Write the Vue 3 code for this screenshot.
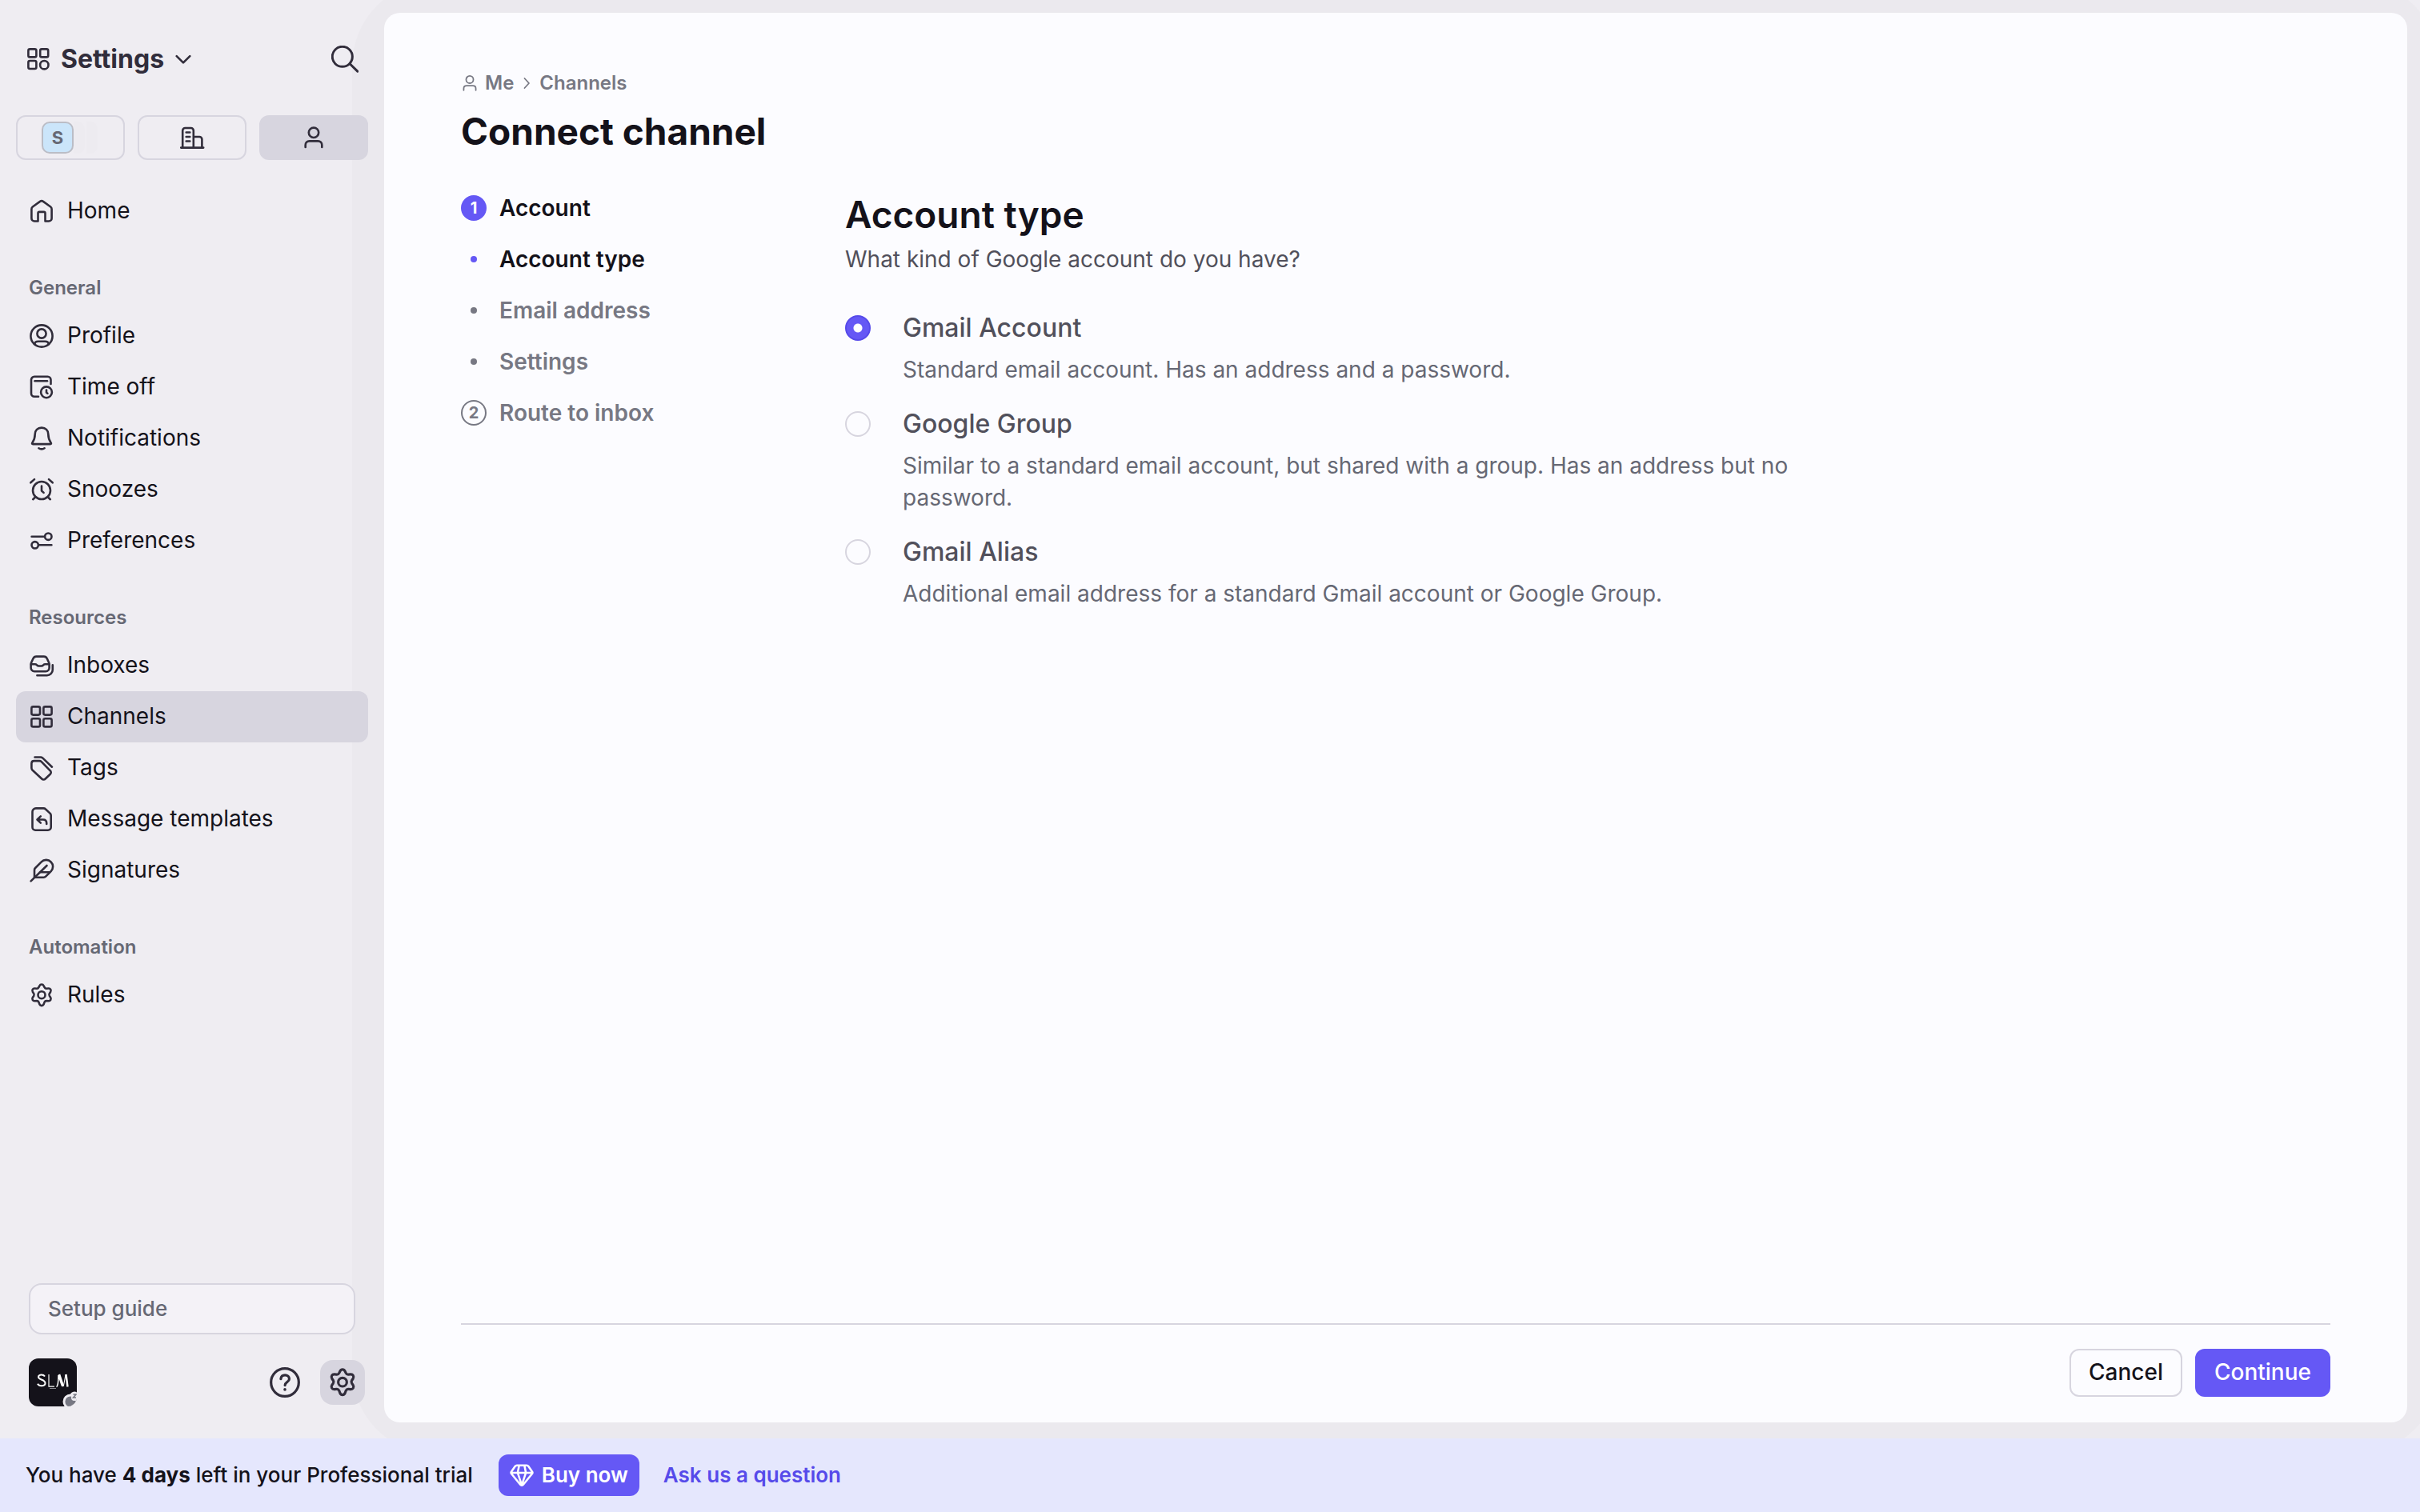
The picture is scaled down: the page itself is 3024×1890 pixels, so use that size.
<script setup>
import { ref, h } from 'vue'

const ICONS = {
  home: '<path d="M7 28.5h4.5V18.5a1.6 1.6 0 0 1 1.6-1.6h5.8a1.6 1.6 0 0 1 1.6 1.6v10H25a3.6 3.6 0 0 0 3.6-3.6V13.4a3.6 3.6 0 0 0-1.4-2.9L18 3.9a3.4 3.4 0 0 0-4 0L4.8 10.5a3.6 3.6 0 0 0-1.4 2.900v11.500A3.600 3.600 0 0 0 7 28.500z"/>',
  profile: '<circle cx="16" cy="16" r="13.600"/><circle cx="16" cy="13" r="5.600"/><path d="M7 26.200c.6-2.400 2.200-3.400 4.600-3.400h8.800c2.400 0 4 1 4.600 3.400"/>',
  timeoff: '<path d="M27.500 12V6.800a4 4 0 0 0-4-4H7a4 4 0 0 0-4 4v17a4 4 0 0 0 4 4h5"/><path d="M7.500 8.300h15.500"/><circle cx="22" cy="22.300" r="6.900"/><path d="M22 19.500v3.200l1.400 1"/>',
  bell: '<path d="M16 2.600c-5 0-8.300 3.500-8.300 8.200 0 4.500-1.200 7.600-3.300 10.600-.7 1.100-.3 1.700.8 1.700h21.600c1.100 0 1.500-.6.8-1.700-2.100-3-3.300-6.100-3.300-10.600 0-4.700-3.300-8.200-8.300-8.200z"/><path d="M12.400 28.300c1 .7 2.200 1.100 3.600 1.100s2.600-.4 3.600-1.100"/>',
  snooze: '<circle cx="16" cy="17" r="11"/><path d="M16 11.500v6l2.600 2.400M2.300 7.300 7 3.100M29.700 7.300 25 3.100M8 25.500l-2.800 2.700M24 25.500l2.800 2.700"/>',
  sliders: '<circle cx="24.300" cy="10.700" r="4.200"/><circle cx="7.700" cy="21.300" r="4.200"/><path d="M3.600 10.700h16M12.400 21.300h16"/>',
  inboxes: '<path d="M2.600 14.500v4.300a4.400 4.400 0 0 0 4.400 4.400h14.200a4.400 4.400 0 0 0 4.400-4.400v-4.300c0-.8-.2-1.500-.5-2.200l-2.300-5.100a4.400 4.400 0 0 0-4-2.600H9.400a4.400 4.400 0 0 0-4 2.600l-2.300 5.100c-.3.700-.5 1.400-.5 2.200z"/><path d="M3 14.200h4.800c1 0 1.700.5 2.300 1.100.7.800 1.500 1.200 2.500 1.200h3c1 0 1.800-.4 2.500-1.200.6-.6 1.300-1.100 2.300-1.100h4.800"/><path d="M10.400 28.200h12.400a7 7 0 0 0 7-7v-5.800"/>',
  channels: '<rect x="3.400" y="3.400" width="10.600" height="10.200" rx="2"/><rect x="18.400" y="3.400" width="10.200" height="10.200" rx="2"/><rect x="3.400" y="18.200" width="10.600" height="10.200" rx="2"/><rect x="18.400" y="18.200" width="10.200" height="10.200" rx="2"/>',
  apps: '<rect x="3.400" y="3.400" width="10" height="10" rx="2"/><rect x="18.200" y="3.400" width="10" height="10" rx="2"/><rect x="3.400" y="18" width="10" height="10" rx="2"/><circle cx="23.300" cy="23.200" r="5.200"/>',
  tags: '<path d="M3.400 10.200v5.900c0 .9.400 1.800 1 2.400l11.800 11a3.200 3.200 0 0 0 4.500 0l6-5.700a3 3 0 0 0 0-4.500L15.800 8.100a4 4 0 0 0-2.600-1H6.600a3.200 3.200 0 0 0-3.200 3.100z"/><path d="M7.500 2.500h7.300c.9 0 1.700.3 2.400.9L29 14.700"/>',
  template: '<path d="M9 2.400h9.300c1 0 2 .4 2.700 1.100l5.500 5.100c.8.800 1.200 1.700 1.200 2.800V26a3.800 3.800 0 0 1-3.800 3.800H8.300A3.800 3.800 0 0 1 4.500 26V6.800A4.400 4.400 0 0 1 9 2.400z"/><path d="m14.800 12.400-4.300 4.100 4.300 4.100M11 16.500h6.800c2.600 0 4.400 1.600 4.400 4.400v1"/>',
  feather: '<path d="M2.600 29.400 22.500 10"/><path d="M7 24.800v-9.200c0-1 .4-1.900 1.100-2.600l7.600-7.600a8.200 8.200 0 0 1 12 .1 8.200 8.200 0 0 1 0 11.600l-6.600 6.600c-.7.700-1.600 1.100-2.600 1.100z"/><path d="M14 18.200h11.500"/>',
  gear: '<path d="M13.400 4.200c1.100-2.300 4.100-2.300 5.200 0l1 2c.5 1 1.500 1.600 2.600 1.500l2.300-.2c2.500-.2 4 2.400 2.600 4.500l-1.300 1.900c-.6.900-.6 2.100 0 3l1.300 1.900c1.400 2.100-.1 4.700-2.600 4.500l-2.300-.2c-1.100-.1-2.100.5-2.600 1.500l-1 2.800c-1.100 2.300-4.100 2.300-5.200 0l-1-2.800c-.5-1-1.500-1.600-2.600-1.500l-2.300.2c-2.500.2-4-2.400-2.600-4.500l1.300-1.900c.6-.9.600-2.100 0-3L4.900 12c-1.400-2.100.1-4.700 2.600-4.500l2.300.2c1.100.1 2.100-.5 2.600-1.500z"/><circle cx="16" cy="15.700" r="4.500"/>',
  person: '<circle cx="16" cy="9.400" r="6.600"/><path d="M5 28.800v-3c0-3 2.200-5.200 5.200-5.200h11.600c3 0 5.200 2.200 5.200 5.200v3"/>',
  building: '<path d="M2.200 28.600h28M4.200 28.400V7.200A3.200 3.200 0 0 1 7.400 4h7.200a3.200 3.200 0 0 1 3.200 3.200v21.200M17.800 15h7.400a3.200 3.200 0 0 1 3.200 3.200v10.200M8.700 9.500h4.600M8.700 15h4.600M8.700 20.500h4.600"/>',
  search: '<circle cx="13" cy="13" r="11.800"/><path d="m21.800 21.400 9 8.800"/>',
  help: '<circle cx="16" cy="16" r="14.600"/><path d="M11.700 12.400c.3-2.600 2-4 4.400-4 2.600 0 4.500 1.600 4.500 4 0 3.200-4.500 3.300-4.500 6.600"/><path d="M16 23.300v.2" stroke-width="3"/>',
  chevronDown: '<path d="m6.500 11.500 9.500 9.500 9.500-9.500"/>',
  chevronRight: '<path d="m11 4 11 12-11 12"/>',
  gem: '<path d="M9.400 3h13.200c.9 0 1.700.4 2.200 1.100l5 7.100c.7.900.6 2.100-.1 3L18 28.500c-1 1.300-3 1.300-4 0L2.300 14.200c-.7-.9-.8-2.100-.1-3l5-7.100c.5-.7 1.300-1.100 2.200-1.100zM1.800 12.700h28.400M12.500 3l-2 9.700L16 29.200l5.500-16.500L19.500 3"/>'
}

const Icon = (props) =>
  h('svg', {
    class: 'icon',
    viewBox: '0 0 32 32',
    width: props.size || 32,
    height: props.size || 32,
    fill: 'none',
    stroke: 'currentColor',
    'stroke-width': props.weight || 2.6,
    'stroke-linecap': 'round',
    'stroke-linejoin': 'round',
    'aria-hidden': 'true',
    innerHTML: ICONS[props.name]
  })
Icon.props = ['name', 'size', 'weight']

const sections = [
  { title: '', items: [{ label: 'Home', icon: 'home' }] },
  {
    title: 'General',
    items: [
      { label: 'Profile', icon: 'profile' },
      { label: 'Time off', icon: 'timeoff' },
      { label: 'Notifications', icon: 'bell' },
      { label: 'Snoozes', icon: 'snooze' },
      { label: 'Preferences', icon: 'sliders' }
    ]
  },
  {
    title: 'Resources',
    items: [
      { label: 'Inboxes', icon: 'inboxes' },
      { label: 'Channels', icon: 'channels', active: true },
      { label: 'Tags', icon: 'tags' },
      { label: 'Message templates', icon: 'template' },
      { label: 'Signatures', icon: 'feather' }
    ]
  },
  { title: 'Automation', items: [{ label: 'Rules', icon: 'gear' }] }
]

const steps = [
  { label: 'Account', number: 1, current: true },
  { label: 'Account type', current: true },
  { label: 'Email address' },
  { label: 'Settings' },
  { label: 'Route to inbox', number: 2 }
]

const options = [
  { id: 'gmail', label: 'Gmail Account', text: 'Standard email account. Has an address and a password.' },
  { id: 'group', label: 'Google Group', text: 'Similar to a standard email account, but shared with a group. Has an address but no password.' },
  { id: 'alias', label: 'Gmail Alias', text: 'Additional email address for a standard Gmail account or Google Group.' }
]
const selected = ref('gmail')
</script>

<template>
  <div class="app">
    <div class="workspace">
      <aside class="sidebar">
        <header class="side-head">
          <button class="title-menu" type="button">
            <Icon name="apps" />
            <span>Settings</span>
            <Icon name="chevronDown" size="28" weight="3" />
          </button>
          <button class="plain" type="button" aria-label="Search"><Icon name="search" size="34" weight="2.8" /></button>
        </header>

        <div class="scopes">
          <button class="scope" type="button" aria-label="Shared workspaces">
            <span class="stack"><span class="chip">S</span><span class="ghost"></span><span class="ghost"></span></span>
          </button>
          <button class="scope" type="button" aria-label="Company"><Icon name="building" /></button>
          <button class="scope on" type="button" aria-label="Me"><Icon name="person" size="30" weight="2.8" /></button>
        </div>

        <nav class="nav">
          <section v-for="s in sections" :key="s.title">
            <h2 v-if="s.title" class="nav-title">{{ s.title }}</h2>
            <a v-for="i in s.items" :key="i.label" href="#" class="nav-item" :class="{ active: i.active }">
              <Icon :name="i.icon" /><span>{{ i.label }}</span>
            </a>
          </section>
        </nav>

        <button class="guide" type="button">Setup guide</button>

        <footer class="side-foot">
          <button class="avatar" type="button" aria-label="Account menu">
            <svg viewBox="0 0 60 60" width="60" height="60" aria-hidden="true">
              <g fill="none" stroke="#fff">
                <path d="M20 22.500c-2-3-8-2.500-8 .8 0 3.700 8.500 2.700 8.500 7.700 0 4-7.500 4.500-9.500.8" stroke-width="2"/>
                <path d="M25 20v15.200h7" stroke-width="1.200"/>
                <path d="M34.500 35.500c2-1 2.500-7 2.500-14.500l4.500 13.500" stroke-width="1.600"/>
                <path d="M38 20l5 15" stroke-width="2.600"/>
                <path d="M43.500 34 46 20" stroke-width="1"/>
                <path d="M46.500 20 48.500 35.500" stroke-width="2.400"/>
                <path d="M26 37.500h8" stroke="#8a8991" stroke-width="1"/>
              </g>
              <circle cx="52" cy="54" r="9.500" fill="#efedf2"/>
              <circle cx="57" cy="47" r="5.500" fill="#efedf2"/>
              <circle cx="52" cy="54" r="6.600" fill="#777883"/>
              <circle cx="57" cy="49" r="4" fill="#efedf2"/>
              <path d="M55.500 45h3.500l-3.500 4h3.500" fill="none" stroke="#777883" stroke-width="1.500"/>
            </svg>
          </button>
          <span class="spacer"></span>
          <button class="tool" type="button" aria-label="Help"><Icon name="help" size="38" weight="2.700" /></button>
          <button class="tool on" type="button" aria-label="Settings"><Icon name="gear" size="38" weight="2.700" /></button>
        </footer>
      </aside>

      <main class="panel">
        <nav class="crumbs" aria-label="Breadcrumb">
          <Icon name="person" size="22" weight="2.600" />
          <a href="#">Me</a>
          <Icon name="chevronRight" size="16" weight="3.500" />
          <a href="#">Channels</a>
        </nav>
        <h1>Connect channel</h1>

        <div class="columns">
          <ol class="steps">
            <li v-for="s in steps" :key="s.label" :class="{ current: s.current }">
              <span class="marker"><span v-if="s.number" class="number">{{ s.number }}</span><span v-else class="dot"></span></span>
              {{ s.label }}
            </li>
          </ol>

          <form id="account-form" class="form" @submit.prevent>
            <h2>Account type</h2>
            <p class="lead">What kind of Google account do you have?</p>
            <div class="options" role="radiogroup" aria-label="Account type">
              <div v-for="o in options" :key="o.id" class="option">
                <input :id="o.id" v-model="selected" type="radio" name="account" :value="o.id" />
                <div>
                  <label :for="o.id">{{ o.label }}</label>
                  <p>{{ o.text }}</p>
                </div>
              </div>
            </div>
          </form>
        </div>

        <footer class="actions">
          <button class="btn" type="button">Cancel</button>
          <button class="btn primary" type="submit" form="account-form">Continue</button>
        </footer>
      </main>
    </div>

    <div class="trial">
      <p>You have <strong>4 days</strong> left in your Professional trial</p>
      <button class="buy" type="button"><Icon name="gem" size="30" weight="2.700" /><span>Buy now</span></button>
      <a href="#">Ask us a question</a>
    </div>
  </div>
</template>

<style>
body {
  margin: 0;
}
</style>

<style scoped>
.app {
  min-height: 100vh;
  display: flex;
  flex-direction: column;
  background: #efedf2;
  color: #14121a;
  font-family: Inter, 'Liberation Sans', sans-serif;
  font-size: 28px;
  line-height: 40px;
}

button {
  font: inherit;
  color: inherit;
  margin: 0;
  padding: 0;
  border: 0;
  background: none;
}

a {
  color: inherit;
  text-decoration: none;
}

h1,
h2,
p,
ol {
  margin: 0;
  padding: 0;
}

.icon {
  display: block;
  flex: none;
}

.workspace {
  position: relative;
  z-index: 0;
  flex: 1;
  display: flex;
  overflow: hidden;
}

.sidebar {
  width: 480px;
  flex: none;
  box-sizing: border-box;
  padding: 48px 20px 40px;
  display: flex;
  flex-direction: column;
  color: #312d3b;
}

.side-head {
  height: 52px;
  padding: 0 12px;
  display: flex;
  align-items: center;
  justify-content: space-between;
}

.title-menu {
  display: flex;
  align-items: center;
  gap: 12px;
  font-size: 32px;
  font-weight: 700;
}

.title-menu .icon:last-child {
  margin-left: -2px;
}

.scopes {
  display: flex;
  gap: 16px;
  margin: 44px 0 32px;
}

.scope {
  flex: 1;
  height: 56px;
  box-sizing: border-box;
  display: flex;
  align-items: center;
  justify-content: center;
  border: 2px solid #d7d5df;
  border-radius: 12px;
}

.scope.on {
  background: #d7d5df;
}

.stack {
  display: flex;
}

.chip,
.ghost {
  box-sizing: border-box;
  width: 40px;
  height: 40px;
  border-radius: 10px;
}

.chip {
  border: 2px solid #bbbdc6;
  background: #cbe5fa;
  color: #666874;
  font-size: 22px;
  font-weight: 700;
  line-height: 36px;
  text-align: center;
}

.ghost {
  width: 16px;
  background: #edebf0;
  border-right: 2px solid #efedf2;
  border-radius: 0 10px 10px 0;
}

.nav {
  flex: 1;
}

.nav-title {
  padding: 44px 16px 8px;
  font-size: 24px;
  font-weight: 600;
  color: #666874;
}

.nav-item {
  height: 64px;
  padding: 0 16px;
  display: flex;
  align-items: center;
  gap: 16px;
  border-radius: 12px;
  color: #312d3b;
}

.nav-item span {
  padding-bottom: 2px;
  color: #14121a;
}

.nav-item.active {
  background: #d7d5df;
}

.guide {
  height: 64px;
  margin: 0 16px 30px;
  padding: 0 22px;
  border: 2px solid #d7d5df;
  border-radius: 16px;
  background: #f4f2f7;
  color: #666874;
  font-size: 26px;
  font-weight: 500;
  text-align: left;
}

.side-foot {
  display: flex;
  align-items: center;
  gap: 16px;
  padding: 0 4px 0 16px;
}

.avatar {
  width: 60px;
  height: 60px;
  border-radius: 12px;
  background: #14121a;
  overflow: hidden;
}

.avatar svg {
  display: block;
}

.spacer {
  flex: 1;
}

.tool {
  width: 56px;
  height: 56px;
  display: flex;
  align-items: center;
  justify-content: center;
  border-radius: 16px;
}

.tool.on {
  background: #d7d5df;
}

.panel {
  position: relative;
  flex: 1;
  min-width: 0;
  margin: 16px 16px 20px 0;
  padding: 68px 96px 32px;
  display: flex;
  flex-direction: column;
}

/* soft rim that surrounds the panel */
.panel::before {
  content: '';
  position: absolute;
  inset: -40px;
  z-index: -2;
  border-radius: 106px;
  background: #ebe9ee;
}

.panel::after {
  content: '';
  position: absolute;
  inset: 0;
  z-index: -1;
  border-radius: 20px;
  background: #fcfcff;
}

.crumbs {
  display: flex;
  align-items: center;
  gap: 8px;
  font-size: 24px;
  font-weight: 600;
  color: #777883;
}

h1 {
  margin-top: 12px;
  font-size: 46px;
  font-weight: 700;
  line-height: 56px;
}

.columns {
  flex: 1;
  display: flex;
  margin-top: 36px;
}

.steps {
  width: 480px;
  flex: none;
  list-style: none;
  font-weight: 600;
  color: #777883;
}

.steps li {
  height: 64px;
  display: flex;
  align-items: center;
  gap: 16px;
}

.marker {
  width: 32px;
  height: 32px;
  display: flex;
  align-items: center;
  justify-content: center;
}

.number {
  width: 28px;
  border: 2px solid #777883;
  border-radius: 50%;
  font-size: 20px;
  font-weight: 700;
  line-height: 28px;
  text-align: center;
}

.dot {
  width: 8px;
  height: 8px;
  border-radius: 50%;
  background: #777883;
}

.steps .current {
  color: #14121a;
}

.current .number {
  border-color: #6558f5;
  background: #6558f5;
  color: #fff;
}

.current .dot {
  background: #6558f5;
}

.form {
  max-width: 1200px;
  padding-top: 12px;
}

.form h2 {
  font-size: 46px;
  font-weight: 600;
  line-height: 56px;
}

.lead {
  margin-top: 8px;
  color: #51505b;
}

.options {
  margin-top: 42px;
  display: flex;
  flex-direction: column;
  gap: 24px;
}

.option {
  display: flex;
  gap: 40px;
}

.option input {
  appearance: none;
  flex: none;
  box-sizing: border-box;
  width: 32px;
  height: 32px;
  margin: 8px 0;
  border: 2px solid #d7d5df;
  border-radius: 50%;
}

.option input:checked {
  border-color: #564aea;
  background: radial-gradient(circle, #fff 5px, #6558f5 6px);
}

.option label {
  display: block;
  font-size: 32px;
  font-weight: 500;
  line-height: 48px;
  color: #51505b;
}

.option p {
  margin-top: 8px;
  color: #666874;
}

.actions {
  display: flex;
  justify-content: flex-end;
  gap: 16px;
  padding-top: 30px;
  border-top: 2px solid #d7d5df;
}

.btn {
  height: 60px;
  padding: 0 22px 2px;
  border: 2px solid #d7d5df;
  border-radius: 12px;
  font-weight: 500;
}

.btn.primary {
  border-color: #6558f5;
  background: #6558f5;
  color: #fff;
}

.trial {
  height: 92px;
  padding: 0 32px;
  display: flex;
  align-items: center;
  background: #e5e7fd;
  font-size: 26px;
  font-weight: 500;
}

.trial strong {
  font-weight: 700;
}

.trial > a {
  color: #564aea;
  font-weight: 600;
}

.buy {
  height: 52px;
  margin: 0 30px 0 32px;
  padding: 0 14px;
  display: flex;
  align-items: center;
  gap: 10px;
  border-radius: 12px;
  background: #6558f5;
  color: #fff;
  font-weight: 600;
}
</style>
